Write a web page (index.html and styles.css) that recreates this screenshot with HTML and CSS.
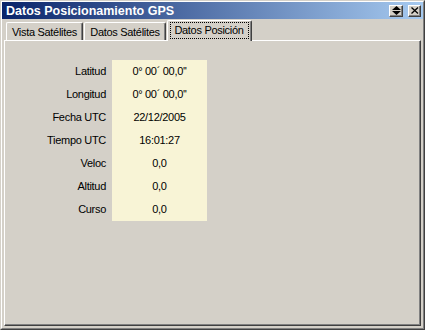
FILE: index.html
```html
<!DOCTYPE html>
<html lang="es">
<head>
    <meta charset="UTF-8">
    <title>Datos Posicionamiento GPS</title>
    <link rel="stylesheet" href="styles.css">
</head>
<body>
    <div class="window">
        <div class="frame">
            <!-- Barra de titulo -->
            <div class="titlebar">
                <span class="title">Datos Posicionamiento GPS</span>
                <div class="title-buttons">
                    <span class="tbtn tbtn-size">
                        <svg width="9" height="9" viewBox="0 0 9 9">
                            <polygon points="4.5,0 9,4 0,4" fill="#000"/>
                            <polygon points="0,5 9,5 4.5,9" fill="#000"/>
                        </svg>
                    </span>
                    <span class="tbtn tbtn-close">
                        <svg width="8" height="7" viewBox="0 0 8 7">
                            <path d="M0.5 0.5 L7 6.5 M7 0.5 L0.5 6.5" stroke="#000" stroke-width="1.3"/>
                        </svg>
                    </span>
                </div>
            </div>

            <div class="body">
                <!-- Pestañas -->
                <div class="tabs">
                    <div class="tab tab-1">Vista Satélites</div>
                    <div class="tab tab-2">Datos Satélites</div>
                    <div class="tab tab-3 active"><span class="focus">Datos Posición</span></div>
                </div>

                <div class="panel">
                    <div class="data">
                        <div class="label">Latitud</div>
                        <div class="value">0° 00´ 00,0''</div>
                        <div class="label">Longitud</div>
                        <div class="value">0° 00´ 00,0''</div>
                        <div class="label">Fecha UTC</div>
                        <div class="value">22/12/2005</div>
                        <div class="label">Tiempo UTC</div>
                        <div class="value">16:01:27</div>
                        <div class="label">Veloc</div>
                        <div class="value">0,0</div>
                        <div class="label">Altitud</div>
                        <div class="value">0,0</div>
                        <div class="label">Curso</div>
                        <div class="value">0,0</div>
                    </div>
                </div>
            </div>
        </div>
    </div>
</body>
</html>
```

FILE: styles.css
```css
body {
    margin: 0;
    background-color: #d4d0c8;
    font-family: "Liberation Sans", Arial, sans-serif;
    font-size: 11px;
    letter-spacing: -0.3px;
    color: #000;
}

.window {
    width: 425px;
    height: 330px;
    box-sizing: border-box;
    border: 1px solid;
    border-color: #d4d0c8 #404040 #404040 #d4d0c8;
    background-color: #d4d0c8;
}
.frame {
    height: 100%;
    box-sizing: border-box;
    border: 1px solid;
    border-color: #fff #808080 #808080 #fff;
    display: flex;
    flex-direction: column;
}

/* Barra de titulo */
.titlebar {
    height: 17px;
    display: flex;
    align-items: center;
    justify-content: space-between;
    padding: 0 2px 0 4px;
    background: linear-gradient(to right, #0a246a, #a6caf0);
}
.title {
    color: #fff;
    font-weight: bold;
    font-size: 12.5px;
    letter-spacing: 0;
}
.title-buttons {
    display: flex;
    gap: 5px;
}
.tbtn {
    display: flex;
    align-items: center;
    justify-content: center;
    height: 12px;
    box-sizing: border-box;
    background-color: #d4d0c8;
    border: 1px solid;
    border-color: #fff #404040 #404040 #fff;
    box-shadow: inset -1px -1px #808080;
}
.tbtn-size {
    width: 14px;
}
.tbtn-close {
    width: 13px;
}

.body {
    flex: 1;
    display: flex;
    flex-direction: column;
    padding: 0 2px 2px 2px;
}

/* Pestañas */
.tabs {
    height: 21px;
    display: flex;
    align-items: flex-end;
    padding-left: 2px;
}
.tab {
    height: 18px;
    box-sizing: border-box;
    border: 1px solid;
    border-color: #fff #404040 transparent #fff;
    border-bottom: none;
    border-radius: 2px 2px 0 0;
    box-shadow: inset -1px 0 #808080;
    display: flex;
    align-items: center;
    justify-content: center;
    padding-top: 1px;
}
.tab-1 {
    width: 77px;
}
.tab-2 {
    width: 82px;
    margin-left: 1px;
}
.tab-3 {
    width: 85px;
    margin-left: 1px;
}
.tab.active {
    height: 21px;
    margin-bottom: -1px;
    position: relative;
    z-index: 1;
    background-color: #d4d0c8;
    padding-top: 0;
    padding-bottom: 1px;
}
.focus {
    border: 1px dotted #000;
    padding: 1px 4px 2px 3px;
}

.panel {
    flex: 1;
    border: 1px solid;
    border-color: #fff #404040 #404040 #fff;
    box-shadow: inset -1px -1px #808080;
}

/* Datos */
.data {
    margin: 19px 0 0 35px;
    display: grid;
    grid-template-columns: 66px 95px;
    grid-auto-rows: 23px;
    column-gap: 6px;
}
.label {
    text-align: right;
    line-height: 23px;
}
.value {
    text-align: center;
    line-height: 23px;
    background-color: #f8f4d6;
}
```
